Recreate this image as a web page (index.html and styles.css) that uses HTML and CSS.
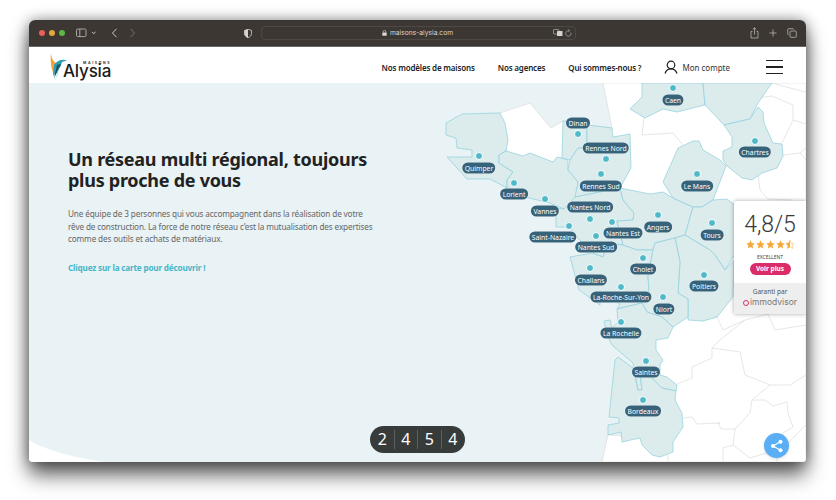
FILE: index.html
```html
<!DOCTYPE html>
<html lang="fr">
<head>
<meta charset="utf-8">
<title>Maisons Alysia</title>
<link rel="stylesheet" href="styles.css">
</head>
<body>
<div class="window">
  <header class="chrome">
    <div class="chrome-left">
      <span class="dot dot-red"></span><span class="dot dot-yellow"></span><span class="dot dot-green"></span>
      <svg class="ic sidebar-ic" width="21" height="10" viewBox="0 0 21 10" fill="none" stroke="#b5b2af" stroke-width=".9"><rect x=".5" y="1" width="9.500" height="7.600" rx="1.200"/><path d="M3.800 1v7.600"/><path d="M16 4l1.800 1.600L19.600 4" stroke="#d8d6d4"/></svg>
      <svg class="ic back-ic" width="7" height="10" viewBox="0 0 7 10" fill="none" stroke="#c9c7c5" stroke-width="1"><path d="M5.500 .8L1.500 5l4 4.200"/></svg>
      <svg class="ic fwd-ic" width="7" height="10" viewBox="0 0 7 10" fill="none" stroke="#75716e" stroke-width="1"><path d="M1.500 .8l4 4.200-4 4.200"/></svg>
    </div>
    <svg class="ic shield-ic" width="8" height="9" viewBox="0 0 8 9"><path d="M4 .3L7.500 1.400V4.500C7.500 6.800 5.500 8.200 4 8.700 2.500 8.200.5 6.800.5 4.500V1.400Z" fill="none" stroke="#d5d3d1" stroke-width=".8"/><path d="M4 .3L.5 1.400V4.500C.5 6.800 2.500 8.200 4 8.700Z" fill="#d5d3d1"/></svg>
    <div class="urlbar">
      <span class="url-center">
        <svg width="5" height="6" viewBox="0 0 5 6"><rect x=".3" y="2.500" width="4.400" height="3.300" rx=".5" fill="#d8d6d4"/><path d="M1.200 2.600V1.700a1.300 1.300 0 0 1 2.600 0v.9" fill="none" stroke="#d8d6d4" stroke-width=".7"/></svg>
        <span class="url-text">maisons-alysia.com</span>
      </span>
      <svg class="ic" width="20" height="8" viewBox="0 0 20 8"><rect x=".5" y=".5" width="5.500" height="4.500" rx=".6" fill="none" stroke="#b5b2af" stroke-width=".7"/><rect x="4" y="2" width="5.500" height="5" rx=".6" fill="#d5d3d1"/><path d="M17 1.300A2.700 2.700 0 1 0 18.900 3" fill="none" stroke="#b5b2af" stroke-width=".7" transform="translate(-1 .6)"/><path d="M15.300 .6l1.500 1-1.400 1" fill="none" stroke="#b5b2af" stroke-width=".6"/></svg>
    </div>
    <div class="chrome-right">
      <svg class="ic" width="9" height="12" viewBox="0 0 9 12" fill="none" stroke="#b5b2af" stroke-width=".8"><path d="M2.500 4.500H1v6.500h7V4.500H6.500M4.500 7.500V.8M2.800 2.400L4.500.8l1.700 1.600"/></svg>
      <svg class="ic" width="8" height="8" viewBox="0 0 8 8" stroke="#b5b2af" stroke-width=".8"><path d="M4 .5v7M.5 4h7"/></svg>
      <svg class="ic" width="10" height="10" viewBox="0 0 10 10" fill="none" stroke="#b5b2af" stroke-width=".8"><rect x="3" y="3" width="6.300" height="6.300" rx="1"/><path d="M1.500 6.800A.9.9 0 0 1 .7 6V1.600a.9.9 0 0 1 .9-.9H6a.9.9 0 0 1 .8.8"/></svg>
    </div>
  </header>

  <nav class="topnav">
    <a class="logo">
      <svg class="logo-bird" width="17" height="28" viewBox="0 0 17 28">
        <path d="M1 1C1.500 6 3 10 8 12.500L4 22C1.500 18 0 10 1 1Z" fill="#f2a33a"/>
        <path d="M4 13C8 8 12 7 17 8.500L12 10C11 15 8 19 3 24Z" fill="#2f9db0"/>
        <path d="M7 13C6 17 5 22 4 26.500L11 12Z" fill="#1f4d63"/>
        <path d="M9 14L5.500 28 8 21Z" fill="#6cc5d2"/>
      </svg>
      <span class="logo-words"><span class="logo-top">MAISONS</span><span class="logo-name">Alysia</span></span>
    </a>
    <div class="nav-links">
      <a class="nav-link">Nos modèles de maisons</a>
      <a class="nav-link">Nos agences</a>
      <a class="nav-link">Qui sommes-nous ?</a>
      <a class="account">
        <svg width="14" height="14" viewBox="0 0 14 14" fill="none" stroke="#222" stroke-width="1.200"><circle cx="7" cy="5" r="3.800"/><path d="M1 13.500C2 10.500 4 8.800 7 8.800s5 1.700 6 4.700"/></svg>
        <span>Mon compte</span>
      </a>
    </div>
    <button class="burger" aria-label="Menu"><span></span><span></span><span></span></button>
  </nav>

  <main class="hero">
    <svg class="map" viewBox="29 83 777 379" width="777" height="379">
      <path class="sea-corner" d="M29 440C45 450 75 458 105 462H29Z"/>
      <polygon class="land" points="603,83 612,128 587,125 563,121 551,128 530,103 500,113 506,151 600,190 620,240 640,300 650,360 640,430 622,436 608,435 602,462 806,462 806,83"/>
      <g class="borders">
        <polyline points="644,118 642,135 673,133 683,145"/>
        <polyline points="772,83 790,88 806,92"/>
        <polyline points="758,98 772,96 793,105 793,120 806,124"/>
        <polyline points="793,120 782,143"/>
        <polyline points="783,155 800,153 806,148"/>
        <polyline points="800,153 806,160"/>
        <polyline points="758,175 760,190 768,199 793,200"/>
        <polyline points="677,384 692,378 692,367 712,358 712,348 720,340 745,320 768,314"/>
        <polyline points="768,314 775,330 806,325"/>
        <polyline points="712,348 740,352 745,375 770,385 790,385 806,375"/>
        <polyline points="770,385 752,400 750,413 735,429 733,445 750,458 783,448 806,425"/>
        <polyline points="683,418 692,417 697,424 720,423 718,423 721,429 735,429"/>
        <polyline points="752,400 765,400 773,406 787,402 788,413 793,427 783,433 777,445 777,462"/>
        <polyline points="723,462 723,448 733,445"/>
        <polyline points="668,455 668,462"/>
        <polyline points="717,317 723,330 745,320"/>
      </g>
      <g class="regions">
        <polygon points="446,123 462,114 500,113 505,123 508,140 506,151 499,155 499,163 513,172 507,180 507,188 490,179 467,179 447,157 472,157 472,150 457,148 456,138 446,135"/>
        <polygon points="506,151 523,156 530,153 553,162 557,157 562,158 568,160 568,170 578,182 575,202 564,209 550,203 525,197 507,188 507,180 513,172 499,163 499,155"/>
        <polygon points="563,121 587,125 587,148 578,148 570,160 562,158"/>
        <polygon points="587,125 612,128 613,137 630,134 631,168 620,188 575,197 578,182 568,170 570,160 578,148 587,148"/>
        <polygon points="575,197 620,188 623,200 634,213 633,220 617,221 623,245 608,243 603,257 592,253 577,237 570,227 556,227 556,208 564,209"/>
        <polygon points="620,188 650,194 663,192 673,198 693,207 685,235 675,238 655,243 653,250 637,250 623,245 617,221 633,220 634,213 623,200"/>
        <polygon points="642,83 642,97 630,109 645,118 663,109 677,112 705,105 703,83"/>
        <polygon points="703,83 772,83 767,90 758,103 750,119 724,125 705,105"/>
        <polygon points="724,125 750,119 758,107 763,112 764,123 773,143 782,144 783,156 777,168 762,173 752,180 742,178 727,166 723,160 723,151 732,147 732,137"/>
        <polygon points="693,141 699,141 703,150 720,160 726,166 713,200 702,207 693,207 673,198 663,182 678,148"/>
        <polygon points="693,207 702,207 713,200 727,199 735,205 760,205 760,250 733,257 725,270 715,255 710,250 685,235"/>
        <polygon points="685,235 675,238 680,262 678,293 688,299 688,320 703,321 717,317 733,297 734,260 725,270 715,255 710,250"/>
        <polygon points="570,257 592,253 603,257 608,243 623,245 637,250 653,250 648,277 649,290 642,303 617,309 620,304 600,293 600,305 579,290"/>
        <polygon points="653,250 655,243 675,238 680,262 678,293 688,299 688,317 673,327 662,317 647,312 642,303 649,290 648,277"/>
        <polygon points="617,309 642,303 647,312 662,317 673,327 668,338 656,340 656,350 663,360 660,365 660,375 667,377 677,385 676,391 662,388 652,378 640,373 642,390 638,390 633,363 612,345 607,335 604,321 610,320 612,328 618,322"/>
        <polygon points="618,357 633,368 638,390 642,390 640,373 652,378 662,388 676,391 675,400 682,413 683,427 673,442 673,452 660,457 652,455 642,445 640,438 622,442 621,432 608,435 608,425 619,423 619,418 609,417 615,360"/>
      </g>
    </svg>

    <div class="pins">
      <span class="pin" style="left:644px;top:5px"></span><span class="tag" style="left:644px;top:17px">Caen</span>
      <span class="pin" style="left:549px;top:51px"></span><span class="tag" style="left:549px;top:40px">Dinan</span>
      <span class="pin" style="left:577px;top:76px"></span><span class="tag" style="left:577px;top:65px">Rennes Nord</span>
      <span class="pin" style="left:572px;top:91px"></span><span class="tag" style="left:572px;top:103px">Rennes Sud</span>
      <span class="pin" style="left:450px;top:73px"></span><span class="tag" style="left:450px;top:85px">Quimper</span>
      <span class="pin" style="left:485px;top:100px"></span><span class="tag" style="left:485px;top:111px">Lorient</span>
      <span class="pin" style="left:516px;top:116px"></span><span class="tag" style="left:516px;top:128px">Vannes</span>
      <span class="pin" style="left:561px;top:136px"></span><span class="tag" style="left:561px;top:124px">Nantes Nord</span>
      <span class="pin" style="left:583px;top:139px"></span><span class="tag" style="left:594px;top:150px">Nantes Est</span>
      <span class="pin" style="left:540px;top:143px"></span><span class="tag" style="left:524px;top:154px">Saint-Nazaire</span>
      <span class="pin" style="left:567px;top:153px"></span><span class="tag" style="left:567px;top:164px">Nantes Sud</span>
      <span class="pin" style="left:629px;top:132px"></span><span class="tag" style="left:629px;top:144px">Angers</span>
      <span class="pin" style="left:683px;top:140px"></span><span class="tag" style="left:683px;top:152px">Tours</span>
      <span class="pin" style="left:668px;top:91px"></span><span class="tag" style="left:668px;top:103px">Le Mans</span>
      <span class="pin" style="left:726px;top:58px"></span><span class="tag" style="left:726px;top:69px">Chartres</span>
      <span class="pin" style="left:614px;top:175px"></span><span class="tag" style="left:614px;top:186px">Cholet</span>
      <span class="pin" style="left:561px;top:185px"></span><span class="tag" style="left:562px;top:197px">Challans</span>
      <span class="pin" style="left:592px;top:204px"></span><span class="tag" style="left:592px;top:214px">La-Roche-Sur-Yon</span>
      <span class="pin" style="left:634px;top:214px"></span><span class="tag" style="left:635px;top:226px">Niort</span>
      <span class="pin" style="left:675px;top:192px"></span><span class="tag" style="left:675px;top:203px">Poitiers</span>
      <span class="pin" style="left:592px;top:239px"></span><span class="tag" style="left:592px;top:250px">La Rochelle</span>
      <span class="pin" style="left:617px;top:278px"></span><span class="tag" style="left:617px;top:289px">Saintes</span>
      <span class="pin" style="left:614px;top:317px"></span><span class="tag" style="left:614px;top:328px">Bordeaux</span>
    </div>

    <section class="intro">
      <h1>Un réseau multi régional, toujours plus proche de vous</h1>
      <p>Une équipe de 3 personnes qui vous accompagnent dans la réalisation de votre rêve de construction. La force de notre réseau c’est la mutualisation des expertises comme des outils et achats de matériaux.</p>
      <a class="cta">Cliquez sur la carte pour découvrir !</a>
    </section>

    <aside class="rating">
      <div class="rating-main">
        <div class="score">4,8/5</div>
        <svg class="stars" width="48" height="9" viewBox="0 0 48 9">
          <defs>
            <path id="star" d="M4.500 .3l1.250 2.800 3 .3-2.250 2 .65 3L4.500 6.900 1.850 8.400l.65-3-2.250-2 3-.3Z"/>
            <linearGradient id="halfstar"><stop offset=".5" stop-color="#f5a93b"/><stop offset=".5" stop-color="#ffffff"/></linearGradient>
          </defs>
          <use href="#star" x="0"/><use href="#star" x="10"/><use href="#star" x="20"/><use href="#star" x="30"/>
          <use href="#star" x="39.500" class="star-half"/>
        </svg>
        <div class="excellent">EXCELLENT</div>
        <a class="more">Voir plus</a>
      </div>
      <div class="rating-foot">
        <div class="guarantee">Garanti par</div>
        <div class="brand"><span class="brand-mark"></span>immodvisor</div>
      </div>
    </aside>

    <div class="counter"><span>2</span><span>4</span><span>5</span><span>4</span></div>

    <button class="share" aria-label="Partager">
      <svg width="14" height="14" viewBox="0 0 14 14" fill="#fff" stroke="#fff"><circle cx="10.500" cy="2.800" r="2" stroke="none"/><circle cx="3" cy="7" r="2" stroke="none"/><circle cx="10.500" cy="11.200" r="2" stroke="none"/><path d="M10.500 2.800L3 7l7.500 4.200" fill="none" stroke-width="1.100"/></svg>
    </button>
  </main>
</div>
</body>
</html>
```

FILE: styles.css
```css
* { box-sizing: border-box; }
html, body { margin: 0; height: 500px; overflow: hidden; background: #fff; }
body { padding: 20px 30px 0 29px; font-family: "Noto Sans", "Open Sans", sans-serif; }

.window {
  width: 777px;
  height: 442px;
  border-radius: 6px 6px 4px 4px;
  overflow: hidden;
  display: flex;
  flex-direction: column;
  box-shadow: 0 13px 20px rgba(0,0,0,.62), 0 0 14px rgba(0,0,0,.42);
}

.chrome {
  height: 27px;
  flex: none;
  background: #3c3733;
  border-bottom: 1px solid #6b6764;
  display: flex;
  align-items: center;
  padding-left: 10px;
}
.chrome-left { display: flex; align-items: center; width: 215px; }
.dot { width: 6px; height: 6px; border-radius: 50%; margin-right: 4px; }
.dot-red { background: #ec5f57; }
.dot-yellow { background: #e3a73a; }
.dot-green { background: #5cb946; margin-right: 0; }
.ic { display: block; flex: none; }
.sidebar-ic { margin-left: 11px; }
.back-ic { margin-left: 14px; }
.fwd-ic { margin-left: 11px; }
.shield-ic { margin-left: -10px; }
.urlbar {
  margin-left: 9px;
  width: 315px;
  height: 14px;
  border: 1px solid #4d4945;
  border-radius: 4px;
  display: flex;
  align-items: center;
  justify-content: flex-end;
  padding-right: 2px;
  position: relative;
}
.url-center {
  position: absolute;
  left: 120px;
  top: 0;
  height: 12px;
  display: flex;
  align-items: center;
  gap: 3px;
}
.url-text { font: 6.700px/12px "Inter", sans-serif; color: #d8d6d4; }
.chrome-right { margin-left: 174px; display: flex; align-items: center; gap: 10px; }

.topnav {
  height: 36px;
  flex: none;
  background: #fff;
  display: flex;
  align-items: center;
  padding: 4px 23px 0 21px;
  color: #222;
}
.logo { display: flex; align-items: flex-end; height: 28px; margin-top: -3px; }
.logo-bird { display: block; }
.logo-words { display: flex; flex-direction: column; align-items: flex-end; margin-left: -4px; }
.logo-top { font: 700 3.500px/4px "Inter", sans-serif; letter-spacing: 1.600px; color: #333; }
.logo-name { font: 500 17px/13px "Inter", sans-serif; color: #1b1b1b; letter-spacing: -.2px; margin-bottom: 2px; }
.nav-links { margin-left: auto; display: flex; align-items: center; gap: 23px; }
.nav-link { font-size: 8px; font-weight: 600; color: #222; letter-spacing: -.17px; white-space: nowrap; }
.account { display: flex; align-items: center; gap: 4px; font-size: 8px; color: #333; white-space: nowrap; }
.burger {
  margin-left: 36px;
  width: 17px;
  padding: 0;
  border: 0;
  background: none;
  display: flex;
  flex-direction: column;
  gap: 5px;
}
.burger span { display: block; height: 1.500px; background: #222; }

.hero { flex: 1; position: relative; background: #e9f2f4; overflow: hidden; }
.map { position: absolute; left: 0; top: 0; display: block; }
.sea-corner { fill: #fff; }
.land { fill: #fff; stroke: #dcdcdc; stroke-width: .7; }
.borders polyline { fill: none; stroke: #dfdfdf; stroke-width: .8; }
.regions polygon { fill: #dcebec; stroke: #8dd0dc; stroke-width: .7; stroke-linejoin: round; }

.pins { position: absolute; inset: 0; }
.pin {
  position: absolute;
  width: 8px;
  height: 8px;
  margin: -4px 0 0 -4px;
  border-radius: 50%;
  background: #4fb8c9;
  border: 1px solid #fff;
}
.tag {
  position: absolute;
  transform: translate(-50%, -50%);
  background: #36627a;
  color: #fff;
  font-size: 6.800px;
  line-height: 11px;
  height: 11px;
  padding: 0 2.500px;
  border-radius: 5.500px;
  white-space: nowrap;
  box-shadow: 0 0 0 .5px rgba(255,255,255,.5);
}

.intro { position: relative; width: 310px; margin-left: 39px; padding-top: 66px; }
.intro h1 {
  margin: 0;
  font-size: 18px;
  line-height: 21px;
  font-weight: 700;
  color: #222;
  letter-spacing: -.27px;
}
.intro p {
  margin: 17px 0 0;
  font-size: 8.200px;
  line-height: 12.500px;
  color: #666;
  letter-spacing: -.14px;
}
.cta {
  display: block;
  margin-top: 16px;
  font-size: 8.200px;
  line-height: 12px;
  font-weight: 700;
  color: #48b6c9;
  letter-spacing: -.2px;
}

.rating {
  position: absolute;
  right: 0;
  top: 118px;
  width: 72px;
  height: 113px;
  background: #fff;
  box-shadow: 0 0 4px rgba(0,0,0,.35);
  display: flex;
  flex-direction: column;
  text-align: center;
  border-radius: 2px 0 0 2px;
}
.rating-main { height: 82px; padding-top: 11px; display: flex; flex-direction: column; align-items: center; }
.score { font: 300 23px/26px "Roboto", sans-serif; color: #3a3a3a; letter-spacing: -.1px; }
.stars { display: block; fill: #f5a93b; margin-top: 2px; }
.star-half { fill: url(#halfstar); stroke: #f5a93b; stroke-width: .5; }
.excellent { font-size: 5px; line-height: 7px; color: #444; margin-top: 5px; }
.more {
  margin-top: 2px;
  width: 41px;
  height: 12px;
  border-radius: 6px;
  background: #d92c68;
  color: #fff;
  font-size: 6.500px;
  font-weight: 700;
  line-height: 12px;
}
.rating-foot { flex: 1; background: #eeeeee; padding-top: 4px; }
.guarantee { font-size: 6.500px; line-height: 10px; color: #555; }
.brand { font: 8.500px/11px "Inter", sans-serif; color: #777; display: flex; align-items: center; justify-content: center; gap: 1px; }
.brand-mark { width: 6px; height: 6px; border-radius: 50%; border: 1.500px solid #d6336c; }

.counter {
  position: absolute;
  left: 341px;
  top: 343px;
  width: 95px;
  height: 27px;
  border-radius: 14px;
  background: #373b3a;
  display: flex;
  align-items: center;
  padding: 0 1px;
}
.counter span {
  flex: 1;
  text-align: center;
  color: #fff;
  font-size: 16px;
  line-height: 19px;
  border-left: 1px solid #5c605f;
}
.counter span:first-child { border-left: 0; }

.share {
  position: absolute;
  left: 735px;
  top: 350px;
  width: 25px;
  height: 25px;
  padding: 0;
  border: 0;
  border-radius: 50%;
  background: #5aaef5;
  display: flex;
  align-items: center;
  justify-content: center;
  box-shadow: 0 1px 3px rgba(0,0,0,.15);
}
```
